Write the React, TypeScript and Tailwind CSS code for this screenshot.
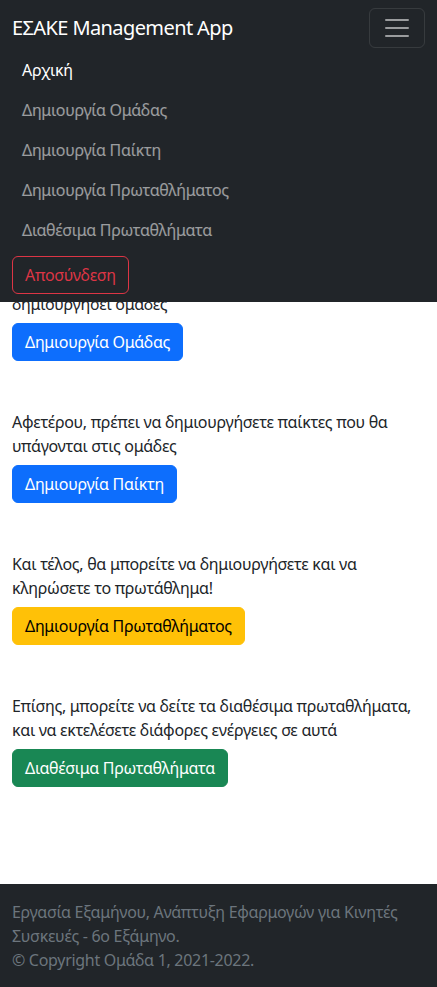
import React from "react";

const font = { fontFamily: '"Noto Sans", "Liberation Sans", sans-serif' };

const sections = [
  {
    first: "Αρχικά, ο διαχειριστής θα πρέπει να",
    text: "δημιουργήσει ομάδες",
    label: "Δημιουργία Ομάδας",
    cls: "bg-[#0d6efd] border-[#0d6efd] text-white",
  },
  {
    text: "Αφετέρου, πρέπει να δημιουργήσετε παίκτες που θα υπάγονται στις ομάδες",
    label: "Δημιουργία Παίκτη",
    cls: "bg-[#0d6efd] border-[#0d6efd] text-white",
  },
  {
    text: "Και τέλος, θα μπορείτε να δημιουργήσετε και να κληρώσετε το πρωτάθλημα!",
    label: "Δημιουργία Πρωταθλήματος",
    cls: "bg-[#ffc107] border-[#ffc107] text-black",
  },
  {
    text: "Επίσης, μπορείτε να δείτε τα διαθέσιμα πρωταθλήματα, και να εκτελέσετε διάφορες ενέργειες σε αυτά",
    label: "Διαθέσιμα Πρωταθλήματα",
    cls: "bg-[#198754] border-[#198754] text-white",
  },
];

const links = [
  "Δημιουργία Ομάδας",
  "Δημιουργία Παίκτη",
  "Δημιουργία Πρωταθλήματος",
  "Διαθέσιμα Πρωταθλήματα",
];

export default function App() {
  return (
    <div
      className="relative min-h-screen flex flex-col bg-white text-[#212529] text-base leading-6 tracking-[-0.3px]"
      style={font}
    >
      {/* navbar, expanded */}
      <nav className="absolute top-0 left-0 right-0 z-10 bg-[#212529] px-3 pt-2 pb-2">
        <div className="flex items-center justify-between">
          <span className="text-xl leading-[30px] tracking-[-0.6px] text-white py-[5px]">
            ΕΣΑΚΕ Management App
          </span>
          <button className="w-14 h-10 rounded-md border border-white/10 flex items-center justify-center">
            <svg width="30" height="30" viewBox="0 0 30 30">
              <path d="M4 7h22M4 15h22M4 23h22" stroke="rgba(255,255,255,0.55)" strokeWidth="2" strokeLinecap="round" />
            </svg>
          </button>
        </div>
        <ul className="mt-[2px]">
          <li className="py-2 pl-[10px] text-white">Αρχική</li>
          {links.map((l) => (
            <li key={l} className="py-2 pl-[10px] text-white/55">
              {l}
            </li>
          ))}
        </ul>
        <button className="mt-[6px] px-3 py-[6px] rounded-md border border-[#dc3545] text-[#dc3545]">
          Αποσύνδεση
        </button>
      </nav>

      <main className="px-3 pt-[268px]">
        {sections.map((s, i) => (
          <div key={s.label} className={i === 0 ? "" : "mt-[49px]"}>
            <p className="mb-[7px]">
              {s.first && (
                <>
                  {s.first}
                  <br />
                </>
              )}
              {s.text}
            </p>
            <button className={`px-3 py-[6px] rounded-md border ${s.cls}`}>{s.label}</button>
          </div>
        ))}
      </main>

      <footer className="mt-auto bg-[#212529] px-3 pt-4 pb-[15px] text-[#6c757d]">
        <p>Εργασία Εξαμήνου, Ανάπτυξη Εφαρμογών για Κινητές Συσκευές - 6ο Εξάμηνο.</p>
        <p>© Copyright Ομάδα 1, 2021-2022.</p>
      </footer>
    </div>
  );
}
